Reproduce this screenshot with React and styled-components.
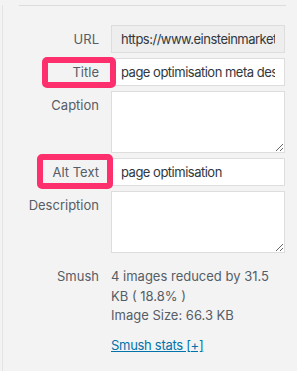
import React from "react";
import styled, { createGlobalStyle } from "styled-components";

const GlobalStyle = createGlobalStyle`
  html, body {
    margin: 0;
    padding: 0;
    background: #f3f3f3;
  }
  body {
    font-family: Inter, "Liberation Sans", Arial, sans-serif;
    font-size: 13px;
    color: #555d66;
  }
`;

const Panel = styled.div`
  margin-left: 2px;
  min-height: 371px;
  border-left: 1px solid #e3e3e3;
  box-sizing: border-box;
`;

const Divider = styled.hr`
  margin: 5px 11px 0 16px;
  border: 0;
  border-top: 1px solid #dcdcdc;
`;

const Fields = styled.div`
  display: grid;
  grid-template-columns: 96px 174px;
  column-gap: 12px;
  row-gap: 5px;
  margin-top: 19px;
`;

const Label = styled.label`
  position: relative;
  z-index: 1;
  justify-self: end;
  align-self: start;
  line-height: 28px;
  color: #555d66;
  white-space: nowrap;
`;

const Highlight = styled.span`
  position: absolute;
  z-index: -1;
  top: ${(p) => p.$top}px;
  bottom: ${(p) => p.$bottom}px;
  left: ${(p) => p.$left}px;
  right: ${(p) => p.$right}px;
  border: 6px solid #fd2f6c;
  border-radius: 5px;
`;

const TextInput = styled.input`
  box-sizing: border-box;
  width: 174px;
  height: 28px;
  margin: 0;
  padding: 0 9px;
  border: 1px solid #dddddd;
  background: ${(p) => (p.readOnly ? "#eeeeee" : "#ffffff")};
  font: inherit;
  font-size: 13px;
  letter-spacing: -0.5px;
  color: #32373c;
  outline: none;
`;

const TextArea = styled.textarea`
  box-sizing: border-box;
  width: 174px;
  height: 62px;
  margin: 0;
  padding: 6px 9px;
  border: 1px solid #dddddd;
  background: #ffffff;
  font: inherit;
  color: #32373c;
  resize: vertical;
  display: block;
  outline: none;
`;

const Stats = styled.div`
  display: grid;
  grid-template-columns: 96px 174px;
  column-gap: 12px;
  margin-top: 14px;
  line-height: 19.5px;
`;

const StatsLabel = styled.div`
  justify-self: end;
`;

const StatsText = styled.div`
  color: #555d66;
`;

const StatsLink = styled.a`
  display: inline-block;
  margin-top: 10px;
  color: #0073aa;
  letter-spacing: -0.3px;
  text-decoration: underline;
`;

export default function App() {
  return (
    <>
      <GlobalStyle />
      <Panel>
        <Divider />
        <Fields>
          <Label>URL</Label>
          <TextInput readOnly value="https://www.einsteinmarketer.com/wp-content/uploads/page-optimisation.png" />

          <Label>
            <Highlight $top={-1} $bottom={-2} $left={-30} $right={-17} />
            Title
          </Label>
          <TextInput defaultValue="page optimisation meta description" />

          <Label>Caption</Label>
          <TextArea />

          <Label>
            <Highlight $top={-4} $bottom={-3} $left={-16} $right={-14} />
            Alt Text
          </Label>
          <TextInput defaultValue="page optimisation" />

          <Label>Description</Label>
          <TextArea />
        </Fields>
        <Stats>
          <StatsLabel>Smush</StatsLabel>
          <StatsText>
            4 images reduced by 31.5 KB ( 18.8% )
            <br />
            Image Size: 66.3 KB
            <br />
            <StatsLink href="#">Smush stats [+]</StatsLink>
          </StatsText>
        </Stats>
      </Panel>
    </>
  );
}
